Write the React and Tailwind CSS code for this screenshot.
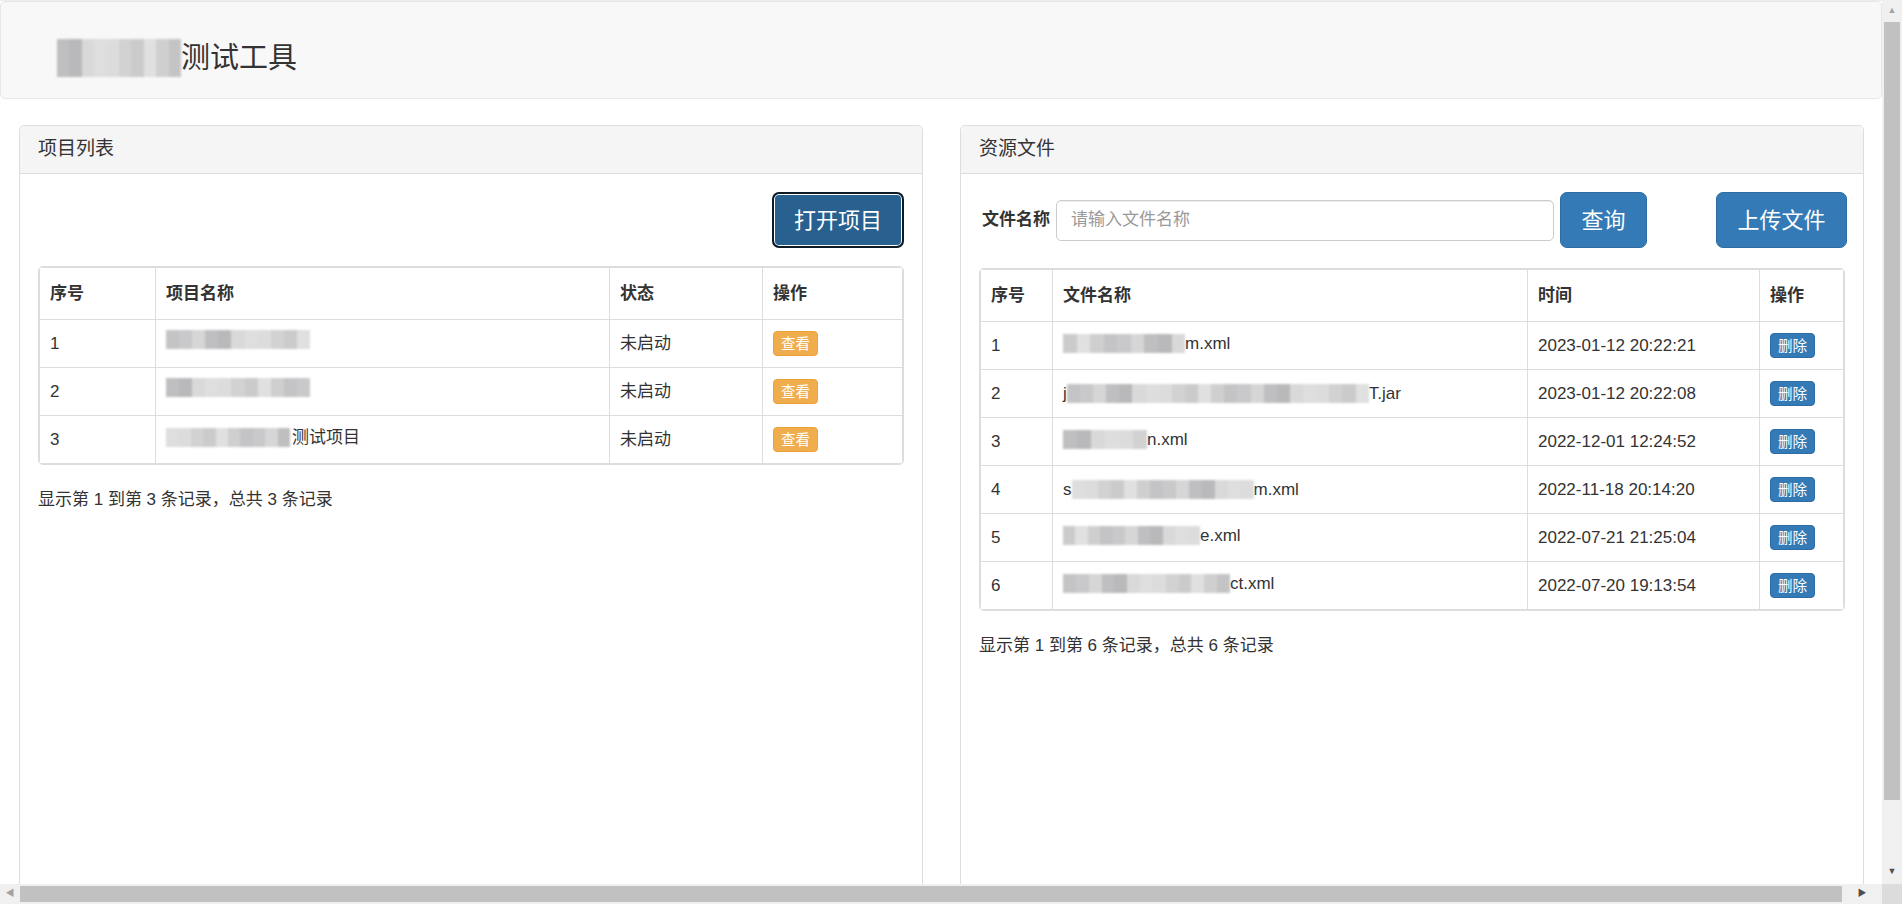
import React from 'react'

const GRAYS = ['#cbcbcb', '#d6d6d6', '#dcdcdc', '#c4c4c6', '#d9d9d9', '#e0e0e0', '#bfbfc1', '#d2d2d2', '#c9c9cb', '#dedede', '#cfcfcf', '#b9b9bb']

// pixelated placeholder for masked text
function Blur({ width, height = 20, seed = 0 }) {
  const cells = Math.max(1, Math.round(width / 13))
  return (
    <span className="inline-flex align-middle blur-[0.8px]" style={{ width, height }}>
      {Array.from({ length: cells }).map((_, i) => (
        <span key={i} className="flex-1 h-full" style={{ background: GRAYS[(i * 5 + seed * 3) % GRAYS.length] }} />
      ))}
    </span>
  )
}

const PROJECTS = [
  { id: 1, blur: 144, tail: '' },
  { id: 2, blur: 144, tail: '' },
  { id: 3, blur: 124, tail: '测试项目' },
]

const FILES = [
  { id: 1, lead: '', blur: 122, tail: 'm.xml', time: '2023-01-12 20:22:21' },
  { id: 2, lead: 'j', blur: 302, tail: 'T.jar', time: '2023-01-12 20:22:08' },
  { id: 3, lead: '', blur: 84, tail: 'n.xml', time: '2022-12-01 12:24:52' },
  { id: 4, lead: 's', blur: 182, tail: 'm.xml', time: '2022-11-18 20:14:20' },
  { id: 5, lead: '', blur: 137, tail: 'e.xml', time: '2022-07-21 21:25:04' },
  { id: 6, lead: '', blur: 167, tail: 'ct.xml', time: '2022-07-20 19:13:54' },
]

function Panel({ title, children }) {
  return (
    <div className="w-[904px] h-[830px] border border-[#dddddd] rounded-[5px] bg-white flex flex-col">
      <div className="h-[48px] shrink-0 bg-[#f5f5f5] border-b border-[#dddddd] rounded-t-[5px] px-[18px] flex items-center text-[19px] text-[#333]">
        {title}
      </div>
      <div className="p-[18px]">{children}</div>
    </div>
  )
}

export default function App() {
  return (
    <div className="w-[1902px] h-[904px] overflow-hidden flex flex-col bg-white text-[#333] font-['Liberation_Sans','Noto_Sans_CJK_SC',sans-serif]">
      <div className="flex flex-1 min-h-0">
        {/* page */}
        <div className="flex-1 min-w-0 overflow-hidden border-t border-[#ececec]">
          <div className="h-[98px] bg-[#f8f8f8] border border-[#e7e7e7] rounded-[5px] flex items-center pl-[56px] pt-[16px]">
            <Blur width={124} height={38} seed={2} />
            <span className="text-[29px] text-[#333] leading-none">测试工具</span>
          </div>

          <div className="flex gap-[37px] pl-[19px] mt-[26px]">
            {/* project list */}
            <Panel title="项目列表">
              <div className="flex justify-end">
                <button className="w-[132px] h-[56px] rounded-[7px] bg-[#286090] border-2 border-[#0c1a26] shadow-[inset_0_0_0_1px_#ffffff] text-white text-[22px]">
                  打开项目
                </button>
              </div>
              <div className="mt-[18px] border border-[#dddddd] rounded-[5px] overflow-hidden">
                <table className="w-full border-collapse text-[17px]">
                  <thead>
                    <tr className="h-[52px]">
                      <th className="w-[116px] border border-[#dddddd] text-left font-bold px-[10px]">序号</th>
                      <th className="w-[454px] border border-[#dddddd] text-left font-bold px-[10px]">项目名称</th>
                      <th className="w-[153px] border border-[#dddddd] text-left font-bold px-[10px]">状态</th>
                      <th className="border border-[#dddddd] text-left font-bold px-[10px]">操作</th>
                    </tr>
                  </thead>
                  <tbody>
                    {PROJECTS.map((p) => (
                      <tr key={p.id} className="h-[48px]">
                        <td className="border border-[#dddddd] px-[10px]">{p.id}</td>
                        <td className="border border-[#dddddd] px-[10px]">
                          <span className="inline-flex items-center">
                            <Blur width={p.blur} height={19} seed={p.id} />
                            {p.tail && <span className="ml-[2px]">{p.tail}</span>}
                          </span>
                        </td>
                        <td className="border border-[#dddddd] px-[10px]">未启动</td>
                        <td className="border border-[#dddddd] px-[10px]">
                          <button className="h-[25px] px-[7px] rounded-[4px] bg-[#f0ad4e] border border-[#eea236] text-white text-[14.5px] leading-none">
                            查看
                          </button>
                        </td>
                      </tr>
                    ))}
                  </tbody>
                </table>
              </div>
              <div className="mt-[23px] text-[17px] leading-[24px]">显示第 1 到第 3 条记录，总共 3 条记录</div>
            </Panel>

            {/* resource files */}
            <Panel title="资源文件">
              <div className="flex items-center">
                <span className="ml-[3px] text-[17px] font-bold">文件名称</span>
                <input
                  className="ml-[6px] w-[498px] h-[41px] border border-[#cccccc] rounded-[5px] px-[14px] text-[17px] outline-none placeholder:text-[#999999] shadow-[inset_0_1px_1px_rgba(0,0,0,0.075)]"
                  placeholder="请输入文件名称"
                />
                <button className="ml-[6px] w-[87px] h-[56px] rounded-[7px] bg-[#337ab7] border border-[#2e6da4] text-white text-[22px]">
                  查询
                </button>
                <div className="flex-1" />
                <button className="-mr-[2px] w-[131px] h-[56px] rounded-[7px] bg-[#337ab7] border border-[#2e6da4] text-white text-[22px]">
                  上传文件
                </button>
              </div>
              <div className="mt-[20px] border border-[#dddddd] rounded-[5px] overflow-hidden">
                <table className="w-full border-collapse text-[17px]">
                  <thead>
                    <tr className="h-[52px]">
                      <th className="w-[72px] border border-[#dddddd] text-left font-bold px-[10px]">序号</th>
                      <th className="w-[475px] border border-[#dddddd] text-left font-bold px-[10px]">文件名称</th>
                      <th className="w-[232px] border border-[#dddddd] text-left font-bold px-[10px]">时间</th>
                      <th className="border border-[#dddddd] text-left font-bold px-[10px]">操作</th>
                    </tr>
                  </thead>
                  <tbody>
                    {FILES.map((f) => (
                      <tr key={f.id} className="h-[48px]">
                        <td className="border border-[#dddddd] px-[10px]">{f.id}</td>
                        <td className="border border-[#dddddd] px-[10px]">
                          <span className="inline-flex items-center">
                            {f.lead && <span>{f.lead}</span>}
                            <Blur width={f.blur} height={19} seed={f.id + 3} />
                            <span>{f.tail}</span>
                          </span>
                        </td>
                        <td className="border border-[#dddddd] px-[10px]">{f.time}</td>
                        <td className="border border-[#dddddd] px-[10px]">
                          <button className="h-[25px] px-[7px] rounded-[4px] bg-[#337ab7] border border-[#2e6da4] text-white text-[14.5px] leading-none">
                            删除
                          </button>
                        </td>
                      </tr>
                    ))}
                  </tbody>
                </table>
              </div>
              <div className="mt-[23px] text-[17px] leading-[24px]">显示第 1 到第 6 条记录，总共 6 条记录</div>
            </Panel>
          </div>
        </div>

        {/* vertical scrollbar */}
        <div className="w-[20px] shrink-0 bg-[#f0f0f0] flex flex-col items-center">
          <div className="h-[22px] flex items-center justify-center text-[9px] text-[#a3a3a3]">▲</div>
          <div className="w-[16px] h-[778px] bg-[#c1c1c1]" />
          <div className="flex-1" />
          <div className="h-[24px] flex items-center justify-center text-[9px] text-[#505050]">▼</div>
        </div>
      </div>

      {/* horizontal scrollbar */}
      <div className="h-[20px] shrink-0 flex">
        <div className="flex-1 bg-[#f0f0f0] flex items-center">
          <div className="w-[20px] flex justify-center text-[9px] text-[#a3a3a3]">◀</div>
          <div className="w-[1822px] h-[16px] bg-[#c1c1c1]" />
          <div className="flex-1 flex justify-center text-[9px] text-[#505050]">▶</div>
        </div>
        <div className="w-[20px] bg-[#dcdcdc]" />
      </div>
    </div>
  )
}
